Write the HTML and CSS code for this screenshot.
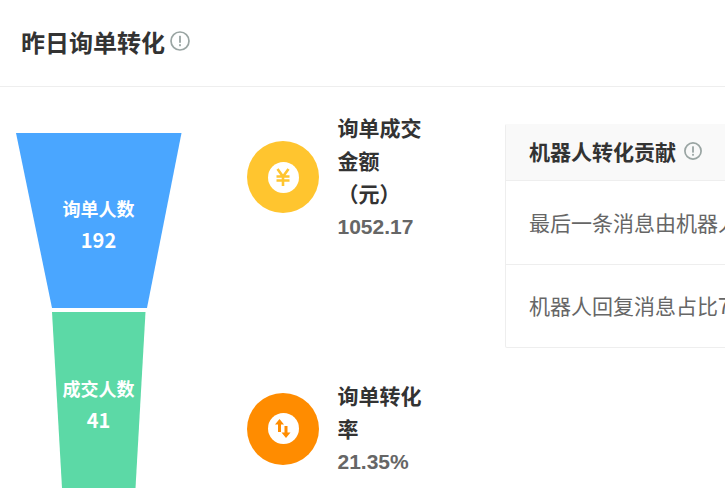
FILE: index.html
```html
<!DOCTYPE html>
<html lang="zh-CN">
<head>
<meta charset="utf-8">
<title>昨日询单转化</title>
<link rel="stylesheet" href="styles.css">
</head>
<body>
<div class="page">
  <header class="head">
    <h1 class="head-title">昨日询单转化</h1>
    <svg class="info info-lg" viewBox="0 0 20 20"><circle cx="10" cy="10" r="9" fill="none" stroke="#9aa5a3" stroke-width="1.7"/><rect x="9.1" y="4.8" width="1.8" height="7" fill="#9aa5a3"/><rect x="9.1" y="13.2" width="1.8" height="2" fill="#9aa5a3"/></svg>
  </header>
  <main class="main">
    <svg class="funnel" viewBox="0 0 182 402" width="182" height="402">
      <polygon points="16,0 181.5,0 147,175 52,175" fill="#4aa6ff"/>
      <polygon points="52,179 145.500,179 135.500,355 62,355" fill="#5cd9a6"/>
      <text class="f-label" x="98.500" y="82.500">询单人数</text>
      <text class="f-num" x="98.500" y="114.500">192</text>
      <text class="f-label" x="98.500" y="263">成交人数</text>
      <text class="f-num" x="98.500" y="295">41</text>
    </svg>
    <div class="metrics">
      <div class="metric">
        <div class="badge badge-yellow">
          <span class="badge-dot"><svg viewBox="0 0 20 20" width="20" height="20"><path d="M4.500 2 10 9.500 15.500 2M3.500 9.500h13M3.500 13.500h13M10 9.500V19" fill="none" stroke="#ffc52f" stroke-width="2.600"/></svg></span>
        </div>
        <div class="metric-text">
          <div class="metric-name">询单成交<br>金额<br>（元）</div>
          <div class="metric-value">1052.17</div>
        </div>
      </div>
      <div class="metric">
        <div class="badge badge-orange">
          <span class="badge-dot"><svg viewBox="0 0 20 20" width="20" height="20"><path d="M6.500 0 11 5.500H8V13H5V5.500H2zM13 19 8.500 13.500H11.500V7H14.500V13.500H17.500z" fill="#ff8c00"/></svg></span>
        </div>
        <div class="metric-text">
          <div class="metric-name">询单转化<br>率</div>
          <div class="metric-value">21.35%</div>
        </div>
      </div>
    </div>
    <section class="panel">
      <div class="panel-head">
        <h2 class="panel-title">机器人转化贡献</h2>
        <svg class="info info-sm" viewBox="0 0 20 20"><circle cx="10" cy="10" r="9" fill="none" stroke="#9aa5a3" stroke-width="1.9"/><rect x="9" y="4.8" width="2" height="7" fill="#9aa5a3"/><rect x="9" y="13.2" width="2" height="2" fill="#9aa5a3"/></svg>
      </div>
      <div class="panel-row">最后一条消息由机器人发送的询单占比65.12%</div>
      <div class="panel-row">机器人回复消息占比72.40%</div>
    </section>
  </main>
</div>
</body>
</html>
```

FILE: styles.css
```css
* { box-sizing: border-box; }
html, body { margin: 0; padding: 0; background: #fff; overflow: hidden; }
body { font-family: "Noto Sans CJK SC", "Liberation Sans", sans-serif; color: #333; }
.page { width: 1000px; height: 504px; overflow: hidden; }
.head {
  height: 87px;
  padding-left: 21px;
  padding-bottom: 5px;
  display: flex;
  align-items: center;
  gap: 5px;
  border-bottom: 1px solid #eeeeee;
}
.head-title { margin: 0; font-size: 24px; font-weight: 700; color: #333; line-height: 1; padding-top: 2px; }
.info { flex: none; }
.info-lg { width: 20px; height: 20px; }
.info-sm { width: 18px; height: 18px; }
.main { display: flex; align-items: flex-start; }
.funnel { flex: none; margin-top: 46px; }
.f-label { font-size: 18px; font-weight: 700; fill: #fff; text-anchor: middle; }
.f-num { font-size: 20px; font-weight: 700; fill: #fff; text-anchor: middle; }
.metrics {
  flex: none;
  width: 258px;
  margin-left: 65px;
  padding-top: 24px;
  display: flex;
  flex-direction: column;
  gap: 136px;
}
.metric { display: flex; align-items: center; gap: 18.500px; }
.badge {
  flex: none;
  width: 72px;
  height: 72px;
  border-radius: 50%;
  display: flex;
  align-items: center;
  justify-content: center;
}
.badge-yellow { background: #ffc52f; }
.badge-orange { background: #ff8c00; }
.badge-dot {
  width: 31px;
  height: 31px;
  border-radius: 50%;
  background: #fff;
  display: flex;
  align-items: center;
  justify-content: center;
}
.metric-text { font-size: 21px; line-height: 33px; font-weight: 700; }
.metric-name { color: #333; }
.metric-value { color: #666; font-family: "Liberation Sans", sans-serif; font-size: 21px; }
.panel {
  flex: none;
  width: 400px;
  margin-top: 37px;
  border: 1px solid #eeeeee;
  border-top: 0;
  border-radius: 2px;
  font-size: 21px;
}
.panel-head {
  height: 57px;
  padding-left: 23px;
  padding-bottom: 2px;
  display: flex;
  align-items: center;
  gap: 8px;
  background: #f9f9f9;
  border-bottom: 1px solid #eeeeee;
}
.panel-title { margin: 0; font-size: 21px; font-weight: 700; color: #333; line-height: 1; }
.panel-row {
  height: 83px;
  padding-left: 23px;
  padding-bottom: 2px;
  display: flex;
  align-items: center;
  color: #666;
  white-space: nowrap;
}
.panel-row + .panel-row { border-top: 1px solid #eeeeee; }
```
